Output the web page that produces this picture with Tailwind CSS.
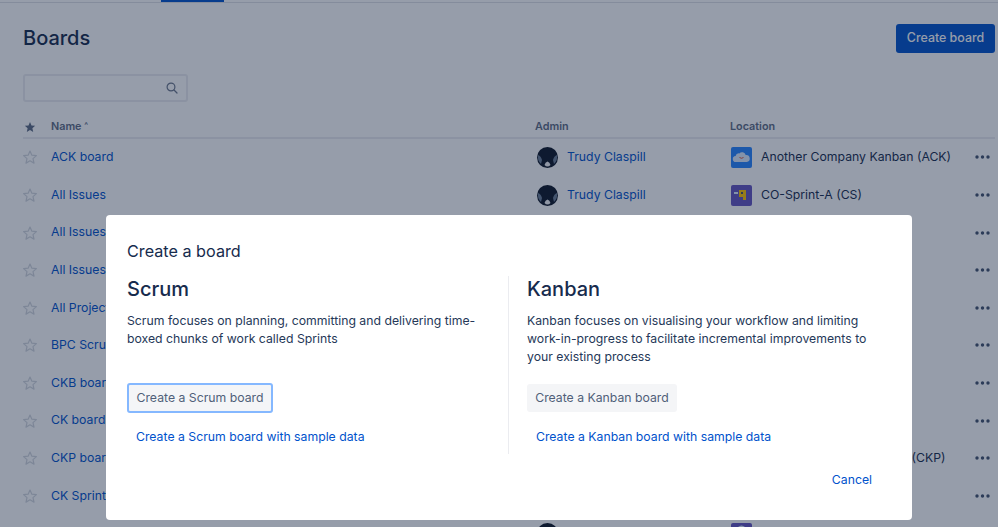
<!DOCTYPE html>
<html lang="en">
<head>
    <meta charset="UTF-8">
    <meta name="viewport" content="width=device-width, initial-scale=1.0">
    <title>Boards</title>
    <script src="https://cdn.jsdelivr.net/npm/@tailwindcss/browser@4"></script>
</head>
<body class="relative h-[527px] overflow-hidden bg-white font-['Inter',sans-serif] text-[12.25px] text-[#172b4d]">

    <!-- Top nav edge -->
    <div class="h-[3px] border-b border-[#dfe1e6]">
        <div class="ml-[161px] h-[2px] w-[63px] bg-[#0052cc]"></div>
    </div>

    <!-- Boards page -->
    <main class="pl-[23px] pr-[3px]">
        <div class="flex h-[50px] items-end justify-between">
            <h1 class="text-[20px] font-medium leading-[30px] text-[#172b4d]">Boards</h1>
            <button class="h-[29px] w-[99px] rounded-[3px] bg-[#0052cc] text-[12.400px] font-medium text-white">Create board</button>
        </div>

        <div class="mt-[21px] flex h-[28px] w-[165px] items-center justify-end rounded-[3px] border-2 border-[#ebecf0] pr-[8px]">
            <svg class="h-[12px] w-[12px] text-[#6b778c]" viewBox="0 0 12 12" fill="none" stroke="currentColor" stroke-width="1.200"><circle cx="5" cy="5" r="3.900"/><path d="M8 8l3 3" stroke-linecap="round"/></svg>
        </div>

        <div class="mt-[12.700px] grid h-[24px] grid-cols-[28px_484px_195px_1fr] items-center border-b-2 border-[#ebecf0] pt-[2px] text-[10.800px] font-semibold text-[#5e6c84]">
            <svg class="ml-[1px] h-[12px] w-[12px] text-[#5e6c84]" viewBox="0 0 24 24" fill="currentColor"><path d="M12 2l3 6.900 7.300.7-5.500 4.900 1.600 7.300L12 17.900l-6.400 3.900 1.600-7.300L1.700 9.600 9 8.900z"/></svg>
            <div>Name <span class="align-top text-[8px]">^</span></div>
            <div>Admin</div>
            <div>Location</div>
        </div>

        <!-- Row 1 -->
        <div class="grid h-[37.6px] grid-cols-[28px_484px_195px_1fr] items-center">
            <svg class="-ml-[1px] h-[16px] w-[16px] text-[#d3d7de]" viewBox="0 0 24 24" fill="none" stroke="currentColor" stroke-width="1.800" stroke-linejoin="round"><path d="M12 3l2.800 6.300 6.800.7-5.100 4.500 1.500 6.700L12 17.700l-6 3.500 1.500-6.700L2.400 10l6.800-.7z"/></svg>
            <a class="text-[#0052cc]">ACK board</a>
            <div class="flex items-center gap-[9px] pl-[2px]">
                <svg class="h-[21px] w-[21px]" viewBox="0 0 21 21"><circle cx="10.500" cy="10.500" r="10.500" fill="#0d1626"/><path d="M1 8q3 1 4 5l-1 4q-4-4-3-9zM20 8q-3 1-4 5l1 4q4-4 3-9z" fill="#6b7d95"/><path d="M7.500 18q.7-3 3-3.500 2.300.5 3 3.500-1.500 1.500-3 1.500T7.500 18z" fill="#f4f5f7"/></svg>
                <a class="text-[#0052cc]">Trudy Claspill</a>
            </div>
            <div class="flex items-center justify-between pl-[1px]">
                <div class="flex items-center gap-[9px]">
                    <svg class="h-[21px] w-[21px]" viewBox="0 0 21 21"><rect width="21" height="21" rx="2" fill="#2684ff"/><path d="M5 15a3 3 0 0 1-.4-6 3.300 3.300 0 0 1 3.700-2.600 3.800 3.800 0 0 1 6.400 1.600 3.500 3.500 0 0 1 1 7z" fill="#deebff"/><path d="M8.500 10.500q2 1.500 4 0" fill="none" stroke="#de350b" stroke-width=".8"/></svg>
                    <span>Another Company Kanban (ACK)</span>
                </div>
                <svg class="mr-[5px] h-[4px] w-[15px] text-[#42526e]" viewBox="0 0 15 4" fill="currentColor"><circle cx="2" cy="2" r="1.700"/><circle cx="7.500" cy="2" r="1.700"/><circle cx="13" cy="2" r="1.700"/></svg>
            </div>
        </div>

        <!-- Row 2 -->
        <div class="grid h-[37.6px] grid-cols-[28px_484px_195px_1fr] items-center">
            <svg class="-ml-[1px] h-[16px] w-[16px] text-[#d3d7de]" viewBox="0 0 24 24" fill="none" stroke="currentColor" stroke-width="1.800" stroke-linejoin="round"><path d="M12 3l2.800 6.300 6.800.7-5.100 4.500 1.500 6.700L12 17.700l-6 3.500 1.500-6.700L2.400 10l6.800-.7z"/></svg>
            <a class="text-[#0052cc]">All Issues</a>
            <div class="flex items-center gap-[9px] pl-[2px]">
                <svg class="h-[21px] w-[21px]" viewBox="0 0 21 21"><circle cx="10.500" cy="10.500" r="10.500" fill="#0d1626"/><path d="M1 8q3 1 4 5l-1 4q-4-4-3-9zM20 8q-3 1-4 5l1 4q4-4 3-9z" fill="#6b7d95"/><path d="M7.500 18q.7-3 3-3.500 2.300.5 3 3.500-1.500 1.500-3 1.500T7.500 18z" fill="#f4f5f7"/></svg>
                <a class="text-[#0052cc]">Trudy Claspill</a>
            </div>
            <div class="flex items-center justify-between pl-[1px]">
                <div class="flex items-center gap-[9px]">
                    <svg class="h-[21px] w-[21px]" viewBox="0 0 21 21"><rect width="21" height="21" rx="2" fill="#6554c0"/><rect x="3" y="7" width="4" height="2" fill="#deebff"/><path d="M8 5h7v10h-3v-3H8z" fill="#ffc400"/><rect x="10" y="7" width="2" height="2" fill="#42526e"/></svg>
                    <span>CO-Sprint-A (CS)</span>
                </div>
                <svg class="mr-[5px] h-[4px] w-[15px] text-[#42526e]" viewBox="0 0 15 4" fill="currentColor"><circle cx="2" cy="2" r="1.700"/><circle cx="7.500" cy="2" r="1.700"/><circle cx="13" cy="2" r="1.700"/></svg>
            </div>
        </div>

        <!-- Rows 3 to 8, mostly behind the dialog -->
        <div class="grid h-[37.6px] grid-cols-[28px_484px_195px_1fr] items-center">
            <svg class="-ml-[1px] h-[16px] w-[16px] text-[#d3d7de]" viewBox="0 0 24 24" fill="none" stroke="currentColor" stroke-width="1.800" stroke-linejoin="round"><path d="M12 3l2.800 6.300 6.800.7-5.100 4.500 1.500 6.700L12 17.700l-6 3.500 1.500-6.700L2.400 10l6.800-.7z"/></svg>
            <a class="text-[#0052cc]">All Issues</a><div></div>
            <div class="flex justify-end"><svg class="mr-[5px] h-[4px] w-[15px] text-[#42526e]" viewBox="0 0 15 4" fill="currentColor"><circle cx="2" cy="2" r="1.700"/><circle cx="7.500" cy="2" r="1.700"/><circle cx="13" cy="2" r="1.700"/></svg></div>
        </div>
        <div class="grid h-[37.6px] grid-cols-[28px_484px_195px_1fr] items-center">
            <svg class="-ml-[1px] h-[16px] w-[16px] text-[#d3d7de]" viewBox="0 0 24 24" fill="none" stroke="currentColor" stroke-width="1.800" stroke-linejoin="round"><path d="M12 3l2.800 6.300 6.800.7-5.100 4.500 1.500 6.700L12 17.700l-6 3.500 1.500-6.700L2.400 10l6.800-.7z"/></svg>
            <a class="text-[#0052cc]">All Issues</a><div></div>
            <div class="flex justify-end"><svg class="mr-[5px] h-[4px] w-[15px] text-[#42526e]" viewBox="0 0 15 4" fill="currentColor"><circle cx="2" cy="2" r="1.700"/><circle cx="7.500" cy="2" r="1.700"/><circle cx="13" cy="2" r="1.700"/></svg></div>
        </div>
        <div class="grid h-[37.6px] grid-cols-[28px_484px_195px_1fr] items-center">
            <svg class="-ml-[1px] h-[16px] w-[16px] text-[#d3d7de]" viewBox="0 0 24 24" fill="none" stroke="currentColor" stroke-width="1.800" stroke-linejoin="round"><path d="M12 3l2.800 6.300 6.800.7-5.100 4.500 1.500 6.700L12 17.700l-6 3.500 1.500-6.700L2.400 10l6.800-.7z"/></svg>
            <a class="text-[#0052cc]">All Projects</a><div></div>
            <div class="flex justify-end"><svg class="mr-[5px] h-[4px] w-[15px] text-[#42526e]" viewBox="0 0 15 4" fill="currentColor"><circle cx="2" cy="2" r="1.700"/><circle cx="7.500" cy="2" r="1.700"/><circle cx="13" cy="2" r="1.700"/></svg></div>
        </div>
        <div class="grid h-[37.6px] grid-cols-[28px_484px_195px_1fr] items-center">
            <svg class="-ml-[1px] h-[16px] w-[16px] text-[#d3d7de]" viewBox="0 0 24 24" fill="none" stroke="currentColor" stroke-width="1.800" stroke-linejoin="round"><path d="M12 3l2.800 6.300 6.800.7-5.100 4.500 1.500 6.700L12 17.700l-6 3.500 1.500-6.700L2.400 10l6.800-.7z"/></svg>
            <a class="text-[#0052cc]">BPC Scrum</a><div></div>
            <div class="flex justify-end"><svg class="mr-[5px] h-[4px] w-[15px] text-[#42526e]" viewBox="0 0 15 4" fill="currentColor"><circle cx="2" cy="2" r="1.700"/><circle cx="7.500" cy="2" r="1.700"/><circle cx="13" cy="2" r="1.700"/></svg></div>
        </div>
        <div class="grid h-[37.6px] grid-cols-[28px_484px_195px_1fr] items-center">
            <svg class="-ml-[1px] h-[16px] w-[16px] text-[#d3d7de]" viewBox="0 0 24 24" fill="none" stroke="currentColor" stroke-width="1.800" stroke-linejoin="round"><path d="M12 3l2.800 6.300 6.800.7-5.100 4.500 1.500 6.700L12 17.700l-6 3.500 1.500-6.700L2.400 10l6.800-.7z"/></svg>
            <a class="text-[#0052cc]">CKB board</a><div></div>
            <div class="flex justify-end"><svg class="mr-[5px] h-[4px] w-[15px] text-[#42526e]" viewBox="0 0 15 4" fill="currentColor"><circle cx="2" cy="2" r="1.700"/><circle cx="7.500" cy="2" r="1.700"/><circle cx="13" cy="2" r="1.700"/></svg></div>
        </div>
        <div class="grid h-[37.6px] grid-cols-[28px_484px_195px_1fr] items-center">
            <svg class="-ml-[1px] h-[16px] w-[16px] text-[#d3d7de]" viewBox="0 0 24 24" fill="none" stroke="currentColor" stroke-width="1.800" stroke-linejoin="round"><path d="M12 3l2.800 6.300 6.800.7-5.100 4.500 1.500 6.700L12 17.700l-6 3.500 1.500-6.700L2.400 10l6.800-.7z"/></svg>
            <a class="text-[#0052cc]">CK board</a><div></div>
            <div class="flex justify-end"><svg class="mr-[5px] h-[4px] w-[15px] text-[#42526e]" viewBox="0 0 15 4" fill="currentColor"><circle cx="2" cy="2" r="1.700"/><circle cx="7.500" cy="2" r="1.700"/><circle cx="13" cy="2" r="1.700"/></svg></div>
        </div>

        <!-- Row 9: only the end of the location shows past the dialog -->
        <div class="grid h-[37.6px] grid-cols-[28px_484px_195px_1fr] items-center">
            <svg class="-ml-[1px] h-[16px] w-[16px] text-[#d3d7de]" viewBox="0 0 24 24" fill="none" stroke="currentColor" stroke-width="1.800" stroke-linejoin="round"><path d="M12 3l2.800 6.300 6.800.7-5.100 4.500 1.500 6.700L12 17.700l-6 3.500 1.500-6.700L2.400 10l6.800-.7z"/></svg>
            <a class="text-[#0052cc]">CKP board</a><div></div>
            <div class="flex items-center justify-between pl-[31px]">
                <span class="whitespace-nowrap">Company Kanban Project (CKP)</span>
                <svg class="mr-[5px] h-[4px] w-[15px] text-[#42526e]" viewBox="0 0 15 4" fill="currentColor"><circle cx="2" cy="2" r="1.700"/><circle cx="7.500" cy="2" r="1.700"/><circle cx="13" cy="2" r="1.700"/></svg>
            </div>
        </div>

        <!-- Row 10 -->
        <div class="grid h-[37.6px] grid-cols-[28px_484px_195px_1fr] items-center">
            <svg class="-ml-[1px] h-[16px] w-[16px] text-[#d3d7de]" viewBox="0 0 24 24" fill="none" stroke="currentColor" stroke-width="1.800" stroke-linejoin="round"><path d="M12 3l2.800 6.300 6.800.7-5.100 4.500 1.500 6.700L12 17.700l-6 3.500 1.500-6.700L2.400 10l6.800-.7z"/></svg>
            <a class="text-[#0052cc]">CK Sprint</a><div></div>
            <div class="flex justify-end"><svg class="mr-[5px] h-[4px] w-[15px] text-[#42526e]" viewBox="0 0 15 4" fill="currentColor"><circle cx="2" cy="2" r="1.700"/><circle cx="7.500" cy="2" r="1.700"/><circle cx="13" cy="2" r="1.700"/></svg></div>
        </div>

        <!-- Row 11: cut off by the window -->
        <div class="grid h-[37.6px] grid-cols-[28px_484px_195px_1fr] items-center">
            <div></div><div></div>
            <div class="pl-[2px]"><svg class="h-[21px] w-[21px]" viewBox="0 0 21 21"><circle cx="10.500" cy="10.500" r="10.500" fill="#0d1626"/></svg></div>
            <div class="pl-[1px]"><svg class="h-[21px] w-[21px]" viewBox="0 0 21 21"><rect width="21" height="21" rx="2" fill="#6554c0"/><path d="M7 4q3.500-3 7 0z" fill="#deebff"/></svg></div>
        </div>
    </main>

    <!-- Dim layer -->
    <div class="absolute inset-0 bg-[#10203e]/44"></div>

    <!-- Dialog -->
    <div class="absolute left-[106px] top-[215px] h-[305px] w-[806px] rounded-[4px] bg-white pl-[21px] pr-[40px] pt-[24px]">
        <h2 class="text-[16.200px] leading-[24px] text-[#172b4d]">Create a board</h2>

        <div class="mt-[13px] flex">
            <section class="w-[382px] border-r border-[#ebecf0] pb-[3px]">
                <h3 class="text-[20px] font-medium leading-[26px] text-[#172b4d]">Scrum</h3>
                <p class="mt-[10px] h-[54px] w-[355px] leading-[18px] text-[#253858]">Scrum focuses on planning, committing and delivering time-boxed chunks of work called Sprints</p>
                <div class="mt-[17px] flex h-[30px] items-center">
                    <button class="h-[30px] w-[146px] rounded-[3px] border-2 border-[#85b8ff] bg-[#f4f5f7] pt-px text-[#505f79]">Create a Scrum board</button>
                </div>
                <a class="mt-[9px] block pl-[9px] pt-px leading-[28px] text-[#0052cc]">Create a Scrum board with sample data</a>
            </section>

            <section class="pl-[18px]">
                <h3 class="text-[20px] font-medium leading-[26px] text-[#172b4d]">Kanban</h3>
                <p class="mt-[10px] h-[54px] w-[345px] leading-[18px] text-[#253858]">Kanban focuses on visualising your workflow and limiting work-in-progress to facilitate incremental improvements to your existing process</p>
                <div class="mt-[17px] flex h-[30px] items-center">
                    <button class="h-[28px] w-[150px] rounded-[3px] bg-[#f4f5f7] pt-px text-[#505f79]">Create a Kanban board</button>
                </div>
                <a class="mt-[9px] block pl-[9px] pt-px leading-[28px] text-[#0052cc]">Create a Kanban board with sample data</a>
            </section>
        </div>

        <div class="mt-[12px] flex justify-end">
            <a class="leading-[28px] text-[#0052cc]">Cancel</a>
        </div>
    </div>
</body>
</html>
